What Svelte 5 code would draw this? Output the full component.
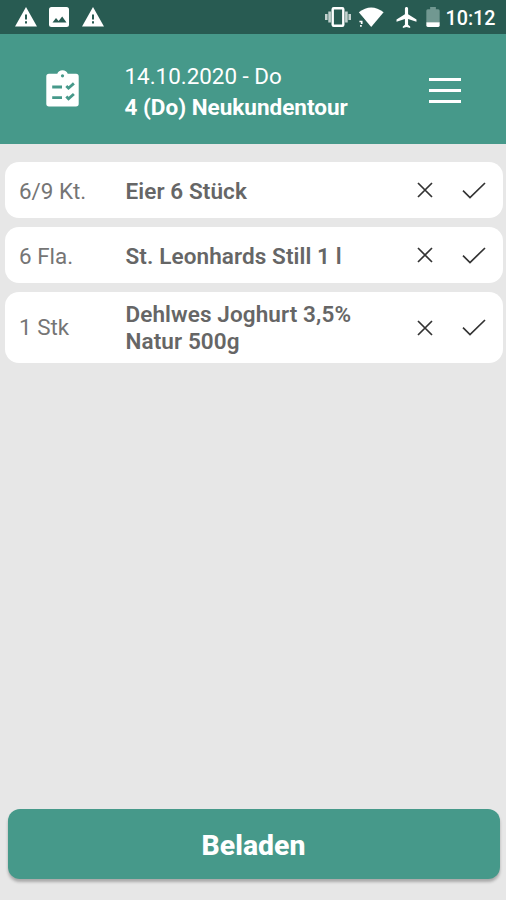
<script>
  const items = [
    { amount: '6/9 Kt.', lines: ['Eier 6 Stück'] },
    { amount: '6 Fla.', lines: ['St. Leonhards Still 1 l'] },
    { amount: '1 Stk', lines: ['Dehlwes Joghurt 3,5%', 'Natur 500g'] }
  ];
</script>

{#snippet warning()}
  <svg width="22" height="20" viewBox="0 0 22 20">
    <path fill="#fff" d="M11 0 22 19.5H0z" />
    <path fill="#285b52" d="M10 7.5h2v5h-2zM10 14.3h2v2.2h-2z" />
  </svg>
{/snippet}

<div class="screen">
  <div class="status">
    <div class="notices">
      {@render warning()}
      <svg class="photo" width="20" height="20" viewBox="0 0 20 20">
        <rect width="20" height="20" rx="2.5" fill="#fff" />
        <path fill="#285b52" d="M3.5 15.5 7 11l2.6 3 3.6-4.5 4.3 6z" />
      </svg>
      {@render warning()}
    </div>
    <div class="system">
      <svg class="vibrate" width="26" height="20" viewBox="0 0 26 20">
        <path fill="none" stroke="#c3d2cf" stroke-width="2.6" d="M1.3 7v6M4.6 4.5v11M24.7 7v6M21.4 4.5v11" />
        <rect x="7.7" y="1.2" width="10.6" height="17.6" rx="1" fill="none" stroke="#fff" stroke-width="2.4" />
      </svg>
      <svg class="wifi" width="26" height="20" viewBox="0 0 26 20">
        <path fill="#fff" d="M.8 5.2Q13.2-4.2 25.6 5.2L13.2 20z" />
        <path fill="#285b52" d="M0 11h5.5l4.5 9H0z" />
        <path fill="none" stroke="#fff" stroke-width="1.7" d="M1.4 14.5h2.3v2.6M2.9 18v1.8" />
      </svg>
      <svg class="plane" width="21" height="21" viewBox="2 2 19 20">
        <path fill="#fff" d="M21 16v-2l-8-5V3.5c0-.83-.67-1.5-1.5-1.5S10 2.67 10 3.5V9l-8 5v2l8-2.5V19l-2 1.5V22l3.5-1 3.5 1v-1.5L13 19v-5.5z" />
      </svg>
      <svg class="battery" width="14" height="20" viewBox="0 0 14 21">
        <path fill="#719891" d="M4 0h6v2.3h2.5Q14 2.3 14 4v12H0V4q0-1.7 1.5-1.7H4z" />
        <path fill="#fff" d="M0 16h14v3.5q0 1.5-1.5 1.5h-11Q0 21 0 19.5z" />
      </svg>
      <span class="clock">10:12</span>
    </div>
  </div>

  <header>
    <svg class="clipboard" width="33" height="37" viewBox="0 0 33 37">
      <path fill="#fff" d="M3 3.8h8.3C12 1.5 13.9.3 16.5.3s4.5 1.2 5.2 3.5H30q2.700 0 2.700 2.700v27.200q0 2.700-2.700 2.700H3q-2.700 0-2.700-2.700V6.500Q.3 3.800 3 3.800z" />
      <circle cx="16.5" cy="5.8" r="1.6" fill="#46998a" />
      <path fill="none" stroke="#46998a" stroke-width="2.8" d="M6.2 17H16M6.2 27.6H16M20.3 16l2.2 2.2 5.4-4.8M20.3 26.6l2.2 2.2 5.4-4.8" />
    </svg>
    <div class="title">
      <div class="date">14.10.2020 - Do</div>
      <div class="tour">4 (Do) Neukundentour</div>
    </div>
    <div class="menu"><i></i><i></i><i></i></div>
  </header>

  <main>
    {#each items as item}
      <div class="card">
        <span class="amount">{item.amount}</span>
        <div class="name">
          {#each item.lines as line}<div>{line}</div>{/each}
        </div>
        <svg class="cross" width="16" height="16" viewBox="0 0 16 16">
          <path d="m1 1 14 14M15 1 1 15" />
        </svg>
        <svg class="check" width="24" height="17" viewBox="0 0 24 17">
          <path d="m1 8.7 7 6.8L23 1" />
        </svg>
      </div>
    {/each}
  </main>

  <button>Beladen</button>
</div>

<style>
  .screen {
    width: 506px;
    height: 900px;
    display: flex;
    flex-direction: column;
    background: #e7e7e7;
    font-family: Roboto, sans-serif;
    overflow: hidden;
  }
  svg { display: block; flex: none; }
  .status {
    height: 34px;
    flex: none;
    box-sizing: border-box;
    display: flex;
    justify-content: space-between;
    padding: 7px 10.5px 0 14.5px;
    background: #285b52;
  }
  .notices, .system { display: flex; align-items: flex-start; }
  .notices { gap: 12.5px; }
  .vibrate { margin-right: 7.5px; }
  .wifi { margin-right: 12px; }
  .plane { margin-right: 8.5px; }
  .battery { margin-right: 6px; }
  .clock {
    color: #fff;
    font-size: 19.7px;
    line-height: 23px;
    font-weight: 500;
    width: 50px;
    white-space: nowrap;
  }
  header {
    height: 109.5px;
    flex: none;
    box-sizing: border-box;
    display: flex;
    padding-left: 46px;
    background: #46998a;
    color: #fff;
  }
  .clipboard { margin-top: 35.5px; }
  .title {
    margin: 27px 0 0 45.5px;
    width: 304.5px;
    font-size: 22.4px;
    line-height: 30px;
    white-space: nowrap;
  }
  .tour { font-weight: 700; font-size: 22.5px; padding-top: 1px; }
  .menu {
    width: 32px;
    height: 25px;
    margin-top: 44px;
    display: flex;
    flex-direction: column;
    justify-content: space-between;
  }
  .menu i { height: 3px; background: #fff; }
  main {
    flex: 1;
    display: flex;
    flex-direction: column;
    gap: 9px;
    padding: 18.8px 3px 0 4.5px;
  }
  .card {
    height: 56px;
    display: flex;
    align-items: center;
    border-radius: 14px;
    background: #fff;
    color: #666;
    font-size: 22.4px;
    line-height: 27px;
    white-space: nowrap;
  }
  .card:last-child { height: 70.5px; }
  .amount { width: 106px; padding: 2px 0 0 14.5px; box-sizing: border-box; color: #757575; }
  .card:last-child .amount { padding-top: 0; }
  .name {
    width: 306.5px;
    padding: 2px 0 0 15px;
    box-sizing: border-box;
    font-weight: 600;
    font-size: 22.5px;
    letter-spacing: .1px;
  }
  .card:last-child .name { padding-top: 0; }
  .card svg path { fill: none; stroke: #333; stroke-width: 1.7; }
  .check { margin-left: 29px; }
  button {
    height: 70px;
    flex: none;
    margin: 0 6.5px 21px 7.5px;
    padding: 3px 0 0;
    border: 0;
    border-radius: 12px;
    background: #46998a;
    box-shadow: 0 3px 3px #0004;
    color: #fff;
    font: 800 28.4px/67px Roboto, sans-serif;
  }
</style>
